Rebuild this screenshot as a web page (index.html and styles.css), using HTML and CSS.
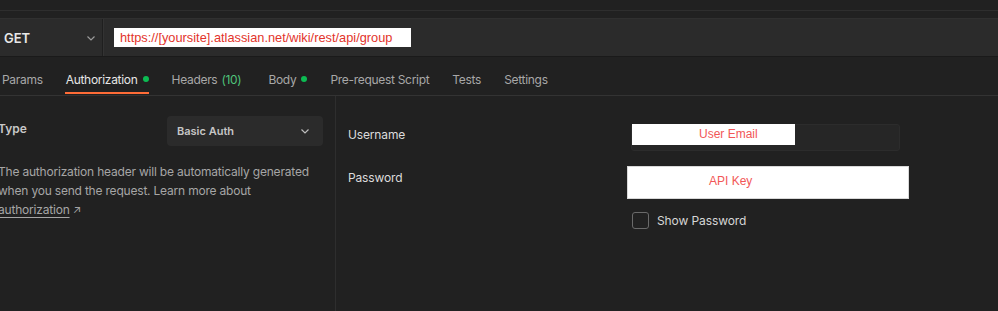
FILE: index.html
```html
<!DOCTYPE html>
<html lang="en">
<head>
    <meta charset="UTF-8">
    <title>Authorization - GET group</title>
    <link rel="stylesheet" href="styles.css">
</head>
<body>
    <div class="app">
        <div class="top-strip"></div>
        <div class="request-bar">
            <div class="method">
                <span>GET</span>
                <svg class="chevron" width="12" height="12" viewBox="0 0 12 12"><path d="M2.5 4.5 L6 8 L9.5 4.5" fill="none" stroke="#9a9a9a" stroke-width="1.2"/></svg>
            </div>
            <div class="url">
                <div class="url-box">https://[yoursite].atlassian.net/wiki/rest/api/group</div>
            </div>
        </div>

        <div class="tabs">
            <div class="tab">Params</div>
            <div class="tab active">Authorization <span class="dot"></span></div>
            <div class="tab headers">Headers <span class="count">(10)</span></div>
            <div class="tab">Body <span class="dot"></span></div>
            <div class="tab">Pre-request Script</div>
            <div class="tab">Tests</div>
            <div class="tab">Settings</div>
        </div>

        <div class="panes">
            <div class="left">
                <div class="type-row">
                    <span class="type-label">Type</span>
                    <div class="select">
                        <span>Basic Auth</span>
                        <svg width="12" height="12" viewBox="0 0 12 12"><path d="M2.5 4.5 L6 8 L9.5 4.5" fill="none" stroke="#bdbdbd" stroke-width="1.2"/></svg>
                    </div>
                </div>
                <p class="desc">The authorization header will be automatically generated when you send the request. Learn more about <a href="#">authorization</a> <span class="arrow">↗</span></p>
            </div>
            <div class="right">
                <div class="field user">
                    <span class="label">Username</span>
                    <div class="input-dark">
                        <div class="mask">User Email</div>
                    </div>
                </div>
                <div class="field pass">
                    <span class="label">Password</span>
                    <div class="mask big">API Key</div>
                </div>
                <label class="show">
                    <span class="box"></span>
                    Show Password
                </label>
            </div>
        </div>
    </div>
</body>
</html>
```

FILE: styles.css
```css
body {
    margin: 0;
    background: #212121;
    font-family: Inter, "Noto Sans", sans-serif;
    color: #cfcfcf;
    overflow: hidden;
}

.app {
    width: 998px;
    height: 311px;
    display: flex;
    flex-direction: column;
}

.top-strip {
    height: 10px;
    border-bottom: 1px solid #2e2e2e;
    margin-bottom: 7px;
}

.request-bar {
    height: 37px;
    display: flex;
    background: #2b2b2b;
    border-top: 1px solid #303030;
    border-bottom: 1px solid #1a1a1a;
}

.method {
    width: 103px;
    display: flex;
    align-items: center;
    justify-content: space-between;
    padding: 0 5px 0 4px;
    box-sizing: border-box;
    border-right: 1px solid #1f1f1f;
    font-size: 13px;
    font-weight: 600;
    color: #e8e8e8;
}

.url {
    flex: 1;
    display: flex;
    align-items: center;
    padding-left: 10px;
    border-left: 1px solid #333;
}

.url-box {
    width: 297px;
    height: 19px;
    margin-top: -1px;
    background: #fff;
    color: #e3342b;
    font-family: "Liberation Sans", Arial, sans-serif;
    font-size: 12.8px;
    line-height: 19px;
    padding-left: 6px;
    box-sizing: border-box;
}

.tabs {
    height: 38px;
    display: flex;
    align-items: stretch;
    gap: 23px;
    padding: 0 0 0 2px;
    border-bottom: 1px solid #333;
    font-size: 12px;
    letter-spacing: -0.3px;
    color: #a8a8a8;
}

.tab {
    display: flex;
    align-items: center;
    padding-top: 6px;
    position: relative;
}

.tab.headers {
    margin-right: 4px;
}

.tab.active {
    color: #e6e6e6;
}

.tab.active::after {
    content: "";
    position: absolute;
    left: -1px;
    right: 0;
    bottom: 1px;
    height: 2px;
    background: #ff6c37;
}

.dot {
    width: 6px;
    height: 6px;
    border-radius: 50%;
    background: #0cbb52;
    margin-left: 5px;
}

.count {
    color: #4fc37a;
    margin-left: 4px;
}

.panes {
    flex: 1;
    display: flex;
}

.left {
    width: 336px;
    border-right: 1px solid #2e2e2e;
    padding: 20px 12px 0 0;
    box-sizing: border-box;
}

.type-row {
    display: flex;
    justify-content: space-between;
    align-items: flex-start;
}

.type-label {
    font-size: 12px;
    font-weight: 600;
    color: #c8c8c8;
    margin-left: -2px;
    margin-top: 5px;
}

.select {
    width: 156px;
    height: 30px;
    background: #2b2b2b;
    border-radius: 4px;
    display: flex;
    align-items: center;
    justify-content: space-between;
    padding: 0 12px 0 10px;
    box-sizing: border-box;
    font-size: 11px;
    font-weight: 600;
    color: #c6c6c6;
}

.desc {
    margin: 16px 0 0 -2px;
    font-size: 12px;
    letter-spacing: -0.2px;
    line-height: 19px;
    color: #a6a6a6;
}

.desc a {
    color: #a6a6a6;
    text-decoration: underline;
    text-underline-offset: 3px;
}

.arrow {
    font-size: 11px;
}

.right {
    flex: 1;
    padding: 27px 0 0 12px;
}

.field {
    display: flex;
    align-items: center;
    font-size: 12px;
    letter-spacing: -0.15px;
    color: #dcdcdc;
}

.label {
    width: 279px;
}

.user {
    height: 28px;
}

.user .label {
    padding-bottom: 5px;
}

.input-dark {
    width: 269px;
    height: 27px;
    margin-left: 4px;
    background: #262626;
    border: 1px solid #2c2c2c;
    border-radius: 3px;
    box-sizing: border-box;
}

.mask {
    background: #fff;
    color: #f25757;
    font-family: "Liberation Sans", Arial, sans-serif;
    font-size: 12px;
    letter-spacing: 0;
}

.input-dark .mask {
    width: 163px;
    height: 21px;
    line-height: 21px;
    margin: -1px 0 0 0;
    padding-left: 67px;
    box-sizing: border-box;
}

.pass {
    margin-top: 15px;
    height: 33px;
    align-items: flex-start;
}

.pass .label {
    margin-top: 4px;
}

.mask.big {
    width: 282px;
    height: 33px;
    line-height: 28px;
    padding-left: 81px;
    box-sizing: border-box;
    border: 1px solid #d8d8d8;
}

.show {
    display: flex;
    align-items: center;
    margin: 13px 0 0 284px;
    font-size: 12px;
    letter-spacing: -0.1px;
    color: #d6d6d6;
}

.box {
    width: 15px;
    height: 15px;
    border: 1px solid #6a6a6a;
    border-radius: 3px;
    margin-right: 8px;
}
```
